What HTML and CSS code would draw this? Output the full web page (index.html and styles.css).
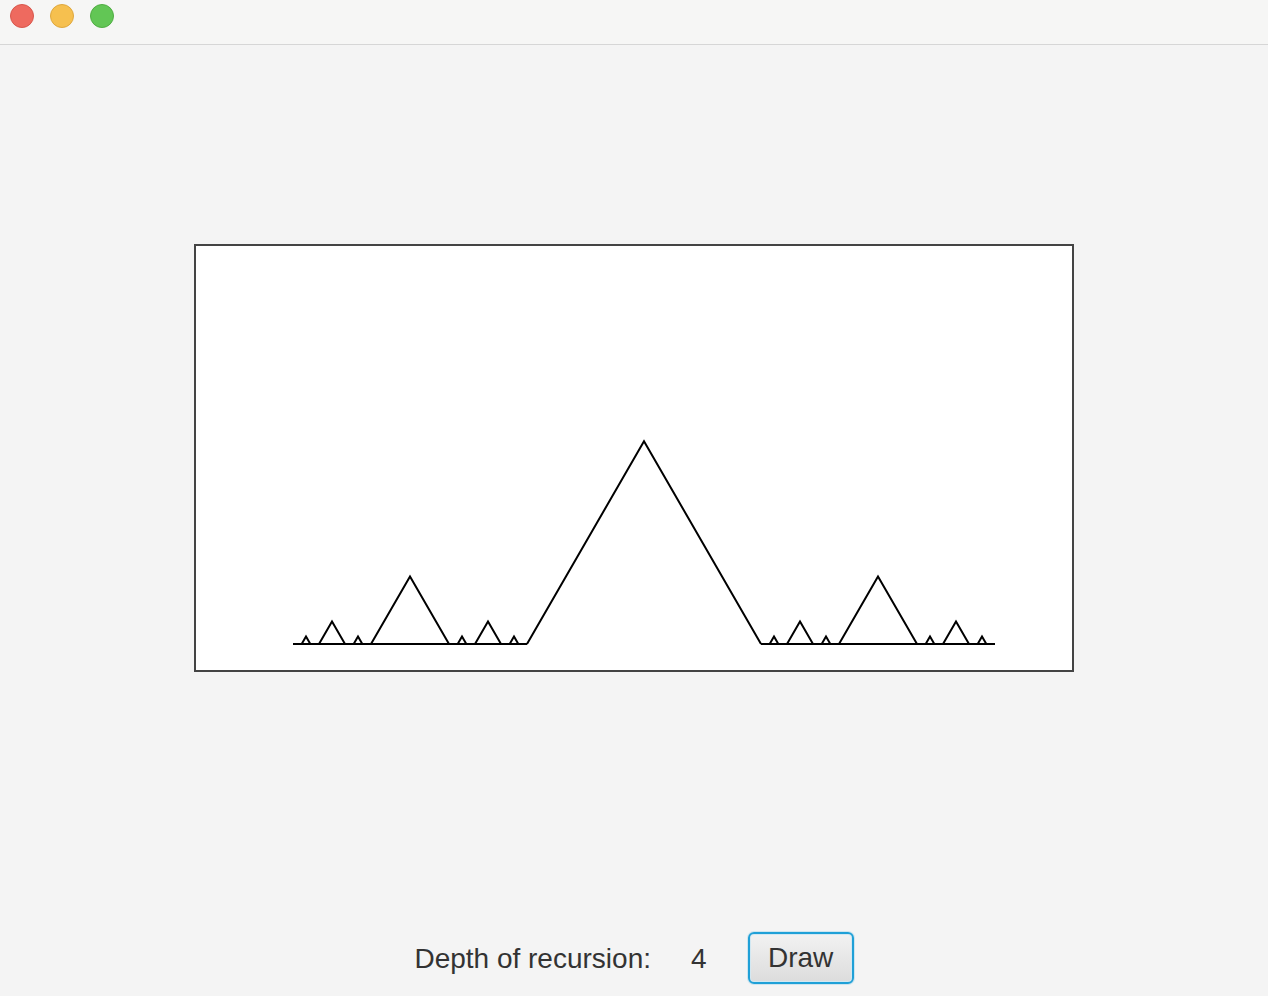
FILE: index.html
```html
<!DOCTYPE html>
<html>
<head>
<meta charset="utf-8">
<link rel="stylesheet" href="styles.css">
</head>
<body>
<div class="window">
  <div class="titlebar">
    <span class="light red"></span>
    <span class="light yellow"></span>
    <span class="light green"></span>
  </div>
  <div class="content">
    <div class="canvas-box">
      <canvas id="fractal" width="876" height="424"></canvas>
    </div>
    <div class="controls">
      <span class="label">Depth of recursion:</span>
      <span class="value">4</span>
      <button class="draw-btn">Draw</button>
    </div>
  </div>
</div>
<script src="app.js"></script>
</body>
</html>
```

FILE: styles.css
```css
html, body {
  margin: 0;
  padding: 0;
}
body {
  width: 1268px;
  height: 996px;
  overflow: hidden;
  background: #f4f4f4;
  font-family: "Liberation Sans", Arial, sans-serif;
}
.window {
  display: flex;
  flex-direction: column;
  height: 996px;
}
.titlebar {
  background: #f6f6f5;
  border-bottom: 1px solid #d6d6d6;
  display: flex;
  align-items: flex-start;
  gap: 16px;
  padding: 4px 0 0 10px;
  height: 40px;
}
.light {
  width: 24px;
  height: 24px;
  border-radius: 50%;
  box-sizing: border-box;
}
.red { background: #ee6a5f; border: 1px solid #d8574c; }
.yellow { background: #f6c04f; border: 1px solid #dfa83e; }
.green { background: #62c655; border: 1px solid #50ad43; }
.content {
  flex: 1;
  display: flex;
  flex-direction: column;
  align-items: center;
  padding-top: 199px;
}
.canvas-box {
  width: 876px;
  height: 424px;
  border: 2px solid #444444;
  background: #ffffff;
}
.canvas-box canvas {
  display: block;
}
.controls {
  margin-top: 260px;
  display: flex;
  align-items: center;
  color: #333333;
  font-size: 28px;
}
.label {
  margin-right: 40px;
  position: relative;
  top: 1px;
}
.value {
  margin-right: 41px;
  position: relative;
  top: 1px;
}
.draw-btn {
  width: 106px;
  height: 52px;
  border: 2px solid #1fa0d7;
  border-radius: 6px;
  background: linear-gradient(#f2f2f2, #dcdcdc);
  box-shadow: inset 0 0 0 1px #d2e8f2, 0 0 0 1px rgba(31, 160, 215, 0.18);
  font-family: "Liberation Sans", Arial, sans-serif;
  font-size: 28px;
  color: #333333;
  padding: 0;
}
```

FILE: app.js
```js
(function () {
  var c = document.getElementById('fractal');
  var ctx = c.getContext('2d');
  ctx.strokeStyle = '#000';
  ctx.lineWidth = 2;
  ctx.lineJoin = 'miter';
  var y = 398;
  var h3 = Math.sqrt(3) / 2;
  function tri(a, b, d) {
    var t = (b - a) / 3;
    ctx.moveTo(a + t, y);
    ctx.lineTo(a + 1.5 * t, y - t * h3);
    ctx.lineTo(a + 2 * t, y);
    if (d > 1) {
      tri(a, a + t, d - 1);
      tri(a + 2 * t, b, d - 1);
    }
  }
  var a = 97, b = 799, t = (b - a) / 3;
  ctx.beginPath();
  ctx.moveTo(a, y);
  ctx.lineTo(a + t, y);
  ctx.moveTo(a + 2 * t, y);
  ctx.lineTo(b, y);
  tri(a, b, 4);
  ctx.stroke();
})();
```
